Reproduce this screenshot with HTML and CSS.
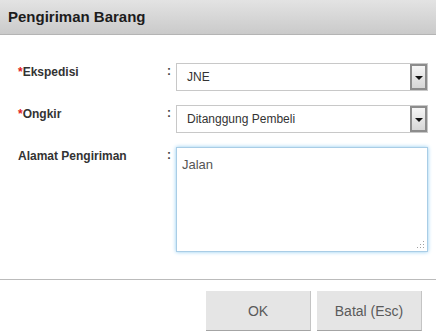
FILE: index.html
```html
<!DOCTYPE html>
<html lang="id">
<head>
    <meta charset="UTF-8">
    <title>Pengiriman Barang</title>
    <link rel="stylesheet" href="styles.css">
</head>
<body>
    <div class="dialog">
        <div class="dialog-head">Pengiriman Barang</div>
        <div class="dialog-body">
            <div class="row">
                <label class="label"><span class="req">*</span>Ekspedisi</label>
                <span class="colon">:</span>
                <div class="select">
                    <span class="select-text">JNE</span>
                    <span class="select-btn"><i class="caret"></i></span>
                </div>
            </div>
            <div class="row">
                <label class="label"><span class="req">*</span>Ongkir</label>
                <span class="colon">:</span>
                <div class="select">
                    <span class="select-text">Ditanggung Pembeli</span>
                    <span class="select-btn"><i class="caret"></i></span>
                </div>
            </div>
            <div class="row">
                <label class="label">Alamat Pengiriman</label>
                <span class="colon">:</span>
                <textarea class="area">Jalan</textarea>
            </div>
        </div>
        <div class="dialog-foot">
            <button class="btn">OK</button>
            <button class="btn">Batal (Esc)</button>
        </div>
    </div>
</body>
</html>
```

FILE: styles.css
```css
body {
    margin: 0;
    background-color: #fff;
    font-family: "Liberation Sans", Arial, sans-serif;
}
.dialog {
    width: 436px;
}
.dialog-head {
    height: 35px;
    box-sizing: border-box;
    padding: 8px 0 0 8px;
    background: linear-gradient(#e3e3e3, #cacaca);
    border-bottom: 1px solid #b4b4b4;
    font-size: 15px;
    font-weight: bold;
    color: #1c1c1c;
}
.dialog-body {
    padding: 28px 8px 27px 18px;
    display: flex;
    flex-direction: column;
    gap: 14px;
}
.row {
    display: grid;
    grid-template-columns: 146px 12px 1fr;
}
.label {
    font-size: 12px;
    font-weight: bold;
    color: #333;
    line-height: 18px;
}
.req {
    color: #e02020;
}
.colon {
    font-size: 12px;
    font-weight: bold;
    color: #444;
    line-height: 16px;
    padding-left: 3px;
}
.select {
    display: flex;
    align-items: center;
    height: 28px;
    box-sizing: border-box;
    border: 1px solid #c8c8c8;
    background-color: #fff;
}
.select-text {
    flex: 1;
    padding-left: 10px;
    font-size: 12px;
    color: #333;
}
.select-btn {
    width: 17px;
    height: 26px;
    box-sizing: border-box;
    border: 2px solid #8c8c8c;
    background: linear-gradient(#f6f6f6, #d6d6d6);
    display: flex;
    align-items: center;
    justify-content: center;
}
.caret {
    width: 0;
    height: 0;
    border-left: 4px solid transparent;
    border-right: 4px solid transparent;
    border-top: 4px solid #111;
    margin-top: 1px;
}
.area {
    height: 105px;
    box-sizing: border-box;
    margin: 0;
    padding: 9px 5px;
    border: 1px solid #a9cde6;
    box-shadow: 0 0 4px #8fcbf0;
    outline: none;
    resize: none;
    background: #fff url("data:image/svg+xml,%3Csvg xmlns='http://www.w3.org/2000/svg' width='8' height='8'%3E%3Cg fill='%23a0a0a0'%3E%3Crect x='6' y='0' width='1' height='1'/%3E%3Crect x='6' y='3' width='1' height='1'/%3E%3Crect x='3' y='3' width='1' height='1'/%3E%3Crect x='6' y='6' width='1' height='1'/%3E%3Crect x='3' y='6' width='1' height='1'/%3E%3Crect x='0' y='6' width='1' height='1'/%3E%3C/g%3E%3C/svg%3E") no-repeat right 2px bottom 2px;
    font-family: "Liberation Sans", Arial, sans-serif;
    font-size: 13px;
    color: #555;
}
.dialog-foot {
    border-top: 1px solid #bbb;
    padding: 11px 14px 0 0;
    display: flex;
    justify-content: flex-end;
    gap: 6px;
}
.btn {
    width: 105px;
    height: 40px;
    border: none;
    border-right: 1px solid #c4c4c4;
    border-bottom: 1px solid #a4a4a4;
    background-color: #e5e5e5;
    font-family: "Liberation Sans", Arial, sans-serif;
    font-size: 14px;
    color: #5a5a5a;
}
```
